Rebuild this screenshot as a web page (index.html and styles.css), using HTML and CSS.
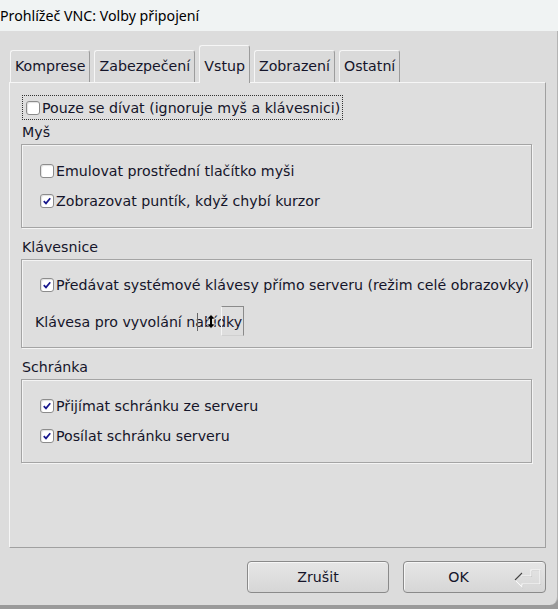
FILE: index.html
```html
<!DOCTYPE html>
<html lang="cs">
<head>
    <meta charset="UTF-8">
    <title>Prohlížeč VNC: Volby připojení</title>
    <link rel="stylesheet" href="styles.css">
</head>
<body>
    <div class="titlebar">Prohlížeč VNC: Volby připojení</div>

    <div class="dialog">
        <!-- záložky -->
        <div class="tabs">
            <div class="tab">Komprese</div>
            <div class="tab">Zabezpečení</div>
            <div class="tab active">Vstup</div>
            <div class="tab">Zobrazení</div>
            <div class="tab">Ostatní</div>
        </div>

        <div class="panel">
            <label class="check focus"><span class="box"></span>Pouze se dívat (ignoruje myš a klávesnici)</label>

            <div class="group-title first">Myš</div>
            <div class="group">
                <label class="check"><span class="box"></span>Emulovat prostřední tlačítko myši</label>
                <label class="check"><span class="box checked"><svg viewBox="0 0 14 14"><path d="M3.2 7.2 L5.8 9.8 L10.8 3.8"/></svg></span>Zobrazovat puntík, když chybí kurzor</label>
            </div>

            <div class="group-title">Klávesnice</div>
            <div class="group tall">
                <label class="check"><span class="box checked"><svg viewBox="0 0 14 14"><path d="M3.2 7.2 L5.8 9.8 L10.8 3.8"/></svg></span>Předávat systémové klávesy přímo serveru (režim celé obrazovky)</label>
                <div class="row hotkey-row">
                    <span class="hotkey">Klávesa pro vyvolání nabídky<span class="caret"></span><svg class="cursor" viewBox="0 0 10 14"><path d="M5 0 L9.5 4.5 L6.5 4.5 L6.5 9.5 L9.5 9.5 L5 14 L0.5 9.5 L3.5 9.5 L3.5 4.5 L0.5 4.5 Z"/></svg><span class="keybox"></span></span>
                </div>
            </div>

            <div class="group-title">Schránka</div>
            <div class="group">
                <label class="check"><span class="box checked"><svg viewBox="0 0 14 14"><path d="M3.2 7.2 L5.8 9.8 L10.8 3.8"/></svg></span>Přijímat schránku ze serveru</label>
                <label class="check"><span class="box checked"><svg viewBox="0 0 14 14"><path d="M3.2 7.2 L5.8 9.8 L10.8 3.8"/></svg></span>Posílat schránku serveru</label>
            </div>
        </div>

        <div class="buttons">
            <button class="btn">Zrušit</button>
            <button class="btn ok"><span class="label">OK</span>
                <svg class="enter" viewBox="0 0 28 20">
                    <path class="shade" d="M9.5 6.5 V9.5 H18.5 V3.5 H27.5 V17.5 H9.5 V20.5 L2.5 13.5"/>
                    <path class="light" d="M9 6 V9 H18 V3 H27 V17 H9 V20 L2 13"/>
                    <path class="dark" d="M2 13 L9 6"/>
                </svg>
            </button>
        </div>
    </div>
</body>
</html>
```

FILE: styles.css
```css
/* okno */
body {
    margin: 0;
    width: 558px;
    height: 609px;
    overflow: hidden;
    background: #9a9a9a;
    font-family: "DejaVu Sans", sans-serif;
    font-size: 14.2px;
    color: #15152a;
}

.titlebar {
    height: 31px;
    line-height: 31px;
    background: #f0f3f3;
    font-family: "Noto Sans", sans-serif;
    font-size: 14.2px;
    color: #000;
    white-space: nowrap;
}

.dialog {
    height: 574px;
    box-sizing: border-box;
    background: #dcdcdc;
    border-right: 1px solid #b4b4b4;
    border-bottom-right-radius: 8px;
    padding: 14px 11px 0 9px;
    display: flex;
    flex-direction: column;
}

/* záložky */
.tabs {
    display: flex;
    align-items: flex-end;
    gap: 4px;
    height: 37px;
    padding-left: 1px;
}

.tab {
    height: 32px;
    box-sizing: border-box;
    padding: 0 4px;
    line-height: 31px;
    border: 1px solid;
    border-color: #f6f6f6 #9c9c9c transparent #f6f6f6;
    border-bottom: none;
    border-radius: 3px 3px 0 0;
    background: #dadada;
    white-space: nowrap;
}

.tab.active {
    height: 38px;
    margin-bottom: -1px;
    padding-top: 5px;
    background: #dedede;
    position: relative;
    z-index: 1;
}

/* panel */
.panel {
    width: 537px;
    height: 466px;
    box-sizing: border-box;
    background: #dedede;
    border: 1px solid;
    border-color: #f6f6f6 #a0a0a0 #a0a0a0 #f6f6f6;
    padding: 12px 12px 0 12px;
}

.check, .row {
    display: flex;
    align-items: center;
    height: 30px;
    white-space: nowrap;
}

.check.focus {
    display: inline-flex;
    height: 23px;
    border: 1px dotted #333;
    padding: 0 2px 0 3px;
}

.box {
    width: 14px;
    height: 14px;
    box-sizing: border-box;
    margin-right: 2px;
    border: 1px solid #8c8c8c;
    border-radius: 3px;
    background: #fff;
    box-shadow: inset 1px 1px 1px rgba(0, 0, 0, 0.12);
    flex: none;
}

.box svg {
    display: block;
    width: 12px;
    height: 12px;
}

.box svg path {
    fill: none;
    stroke: #16168c;
    stroke-width: 2;
}

.group-title {
    height: 18px;
    line-height: 18px;
    margin-top: 10px;
}

.group-title.first {
    margin-top: 3px;
}

.group {
    width: 511px;
    height: 84px;
    box-sizing: border-box;
    margin: 3px 0 0 -1px;
    padding: 11px 0 0 18px;
    border: 1px solid #a4a4a4;
    box-shadow: inset 1px 1px 0 #f4f4f4, 1px 1px 0 #f4f4f4;
}

.group.tall {
    height: 89px;
    padding-top: 10px;
}

.hotkey-row {
    margin-top: 7px;
    margin-left: -5px;
}

.hotkey {
    position: relative;
    line-height: 30px;
}

.caret {
    position: absolute;
    left: 162px;
    top: 6px;
    width: 1px;
    height: 18px;
    background: #666;
}

.cursor {
    position: absolute;
    left: 171px;
    top: 7px;
    width: 10px;
    height: 15px;
}

.cursor path {
    fill: #000;
    stroke: #fff;
    stroke-width: 0.8;
}

.keybox {
    position: absolute;
    left: 186px;
    top: -1px;
    width: 23px;
    height: 30px;
    box-sizing: border-box;
    border: 1px solid;
    border-color: #8a8a8a #8a8a8a #d0d0d0 #f4f4f4;
}

/* tlačítka */
.buttons {
    display: flex;
    justify-content: flex-end;
    gap: 14px;
    margin-top: 13px;
}

.btn {
    width: 142px;
    height: 32px;
    font: inherit;
    color: inherit;
    border: 1px solid #8a8a8a;
    border-radius: 4px;
    background: linear-gradient(#e6e6e6, #d6d6d6);
    box-shadow: inset 1px 1px 0 #f6f6f6;
    padding: 0;
}

.btn.ok {
    width: 143px;
    display: flex;
    align-items: center;
    padding-right: 4px;
}

.btn.ok .label {
    flex: 1;
    text-align: center;
}

.enter {
    width: 28px;
    height: 20px;
    overflow: visible;
}

.enter path {
    fill: none;
    stroke-width: 1.1;
}

.enter .shade {
    stroke: #b8b8b8;
}

.enter .light {
    stroke: #fafafa;
}

.enter .dark {
    stroke: #444;
}
```
